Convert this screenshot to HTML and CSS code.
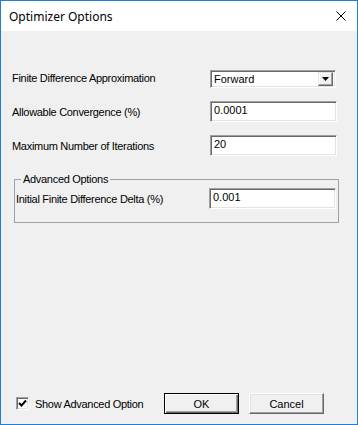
FILE: index.html
```html
<!DOCTYPE html>
<html lang="en">
<head>
    <meta charset="UTF-8">
    <title>Optimizer Options</title>
    <link rel="stylesheet" href="styles.css">
</head>
<body>
    <div class="window">
        <div class="titlebar">
            <span class="title">Optimizer Options</span>
            <span class="close">
                <svg width="10" height="10" viewBox="0 0 10 10"><path d="M0.5 0.5 L9.5 9.5 M9.5 0.5 L0.5 9.5" stroke="#000" stroke-width="1" fill="none"/></svg>
            </span>
        </div>
        <div class="content">
            <div class="row row-first">
                <span class="label">Finite Difference Approximation</span>
                <div class="combo">
                    <span class="combo-text">Forward</span>
                    <span class="combo-btn">
                        <svg width="7" height="4" viewBox="0 0 7 4"><path d="M0 0 H7 L3.5 4 Z" fill="#000"/></svg>
                    </span>
                </div>
            </div>
            <div class="row">
                <span class="label">Allowable Convergence (%)</span>
                <div class="textbox">0.0001</div>
            </div>
            <div class="row">
                <span class="label">Maximum Number of Iterations</span>
                <div class="textbox">20</div>
            </div>

            <!-- Advanced options -->
            <fieldset class="group">
                <legend>Advanced Options</legend>
                <div class="row row-group">
                    <span class="label">Initial Finite Difference Delta (%)</span>
                    <div class="textbox">0.001</div>
                </div>
            </fieldset>

            <div class="footer">
                <label class="check">
                    <span class="checkbox">
                        <svg width="9" height="9" viewBox="0 0 9 9"><path d="M1 4 L3.5 6.5 L8 1.5" stroke="#000" stroke-width="2" fill="none"/></svg>
                    </span>
                    Show Advanced Option
                </label>
                <button class="btn btn-default">OK</button>
                <button class="btn">Cancel</button>
            </div>
        </div>
    </div>
</body>
</html>
```

FILE: styles.css
```css
body {
    margin: 0;
    font-family: "Liberation Sans", Arial, sans-serif;
    font-size: 11px;
    color: #000;
}

.window {
    width: 358px;
    height: 425px;
    box-sizing: border-box;
    border: 1px solid #1b80d8;
    background-color: #f0f0f0;
    display: flex;
    flex-direction: column;
}

.titlebar {
    height: 30px;
    background-color: #fff;
    display: flex;
    align-items: center;
    padding: 0 10px 0 8px;
}

.title {
    flex: 1;
    font-family: "Noto Sans", sans-serif;
    font-size: 12px;
}

.close {
    display: flex;
    margin-right: 1px;
}

.content {
    flex: 1;
    display: flex;
    flex-direction: column;
    padding: 0 0 10px 11px;
}

.row {
    display: flex;
    align-items: center;
    height: 21px;
    margin-top: 13px;
}

.row-first {
    margin-top: 36px;
}

.label {
    width: 198px;
    letter-spacing: -0.3px;
}

/* campos 3D afundados */
.textbox,
.combo {
    box-sizing: border-box;
    width: 127px;
    height: 21px;
    background-color: #fff;
    border: 1px solid;
    border-color: #a0a0a0 #fff #fff #a0a0a0;
    box-shadow: inset 1px 1px 0 #696969, inset -1px -1px 0 #e3e3e3;
    padding: 2px 0 0 3px;
}

.combo {
    width: 126px;
    height: 18px;
    align-self: flex-end;
    display: flex;
    padding: 2px 2px 2px 3px;
}

.combo-text {
    flex: 1;
    line-height: 13px;
}

.combo-btn {
    box-sizing: border-box;
    width: 15px;
    height: 14px;
    margin-top: -1px;
    background-color: #f0f0f0;
    border: 1px solid;
    border-color: #e3e3e3 #696969 #696969 #e3e3e3;
    box-shadow: inset -1px -1px 0 #a0a0a0, inset 1px 1px 0 #fff;
    display: flex;
    align-items: center;
    justify-content: center;
}

.group {
    margin: 17px 0 0 2px;
    padding: 0 0 13px 1px;
    width: 325px;
    box-sizing: border-box;
    border: 1px solid #a0a0a0;
}

.group legend {
    padding: 0 2px;
    margin-left: 5px;
    letter-spacing: -0.3px;
}

.row-group {
    margin-top: 3px;
}

.row-group .label {
    width: 193px;
}

.footer {
    margin-top: auto;
    display: flex;
    align-items: center;
}

.check {
    display: flex;
    align-items: center;
    width: 148px;
    margin-left: 4px;
    letter-spacing: -0.3px;
}

.checkbox {
    box-sizing: border-box;
    width: 13px;
    height: 13px;
    margin-right: 6px;
    background-color: #fff;
    border: 1px solid;
    border-color: #a0a0a0 #fff #fff #a0a0a0;
    box-shadow: inset 1px 1px 0 #696969, inset -1px -1px 0 #e3e3e3;
    display: flex;
    align-items: center;
    justify-content: center;
}

.btn {
    box-sizing: border-box;
    width: 75px;
    height: 21px;
    margin-right: 10px;
    background-color: #f0f0f0;
    font-family: "Liberation Sans", Arial, sans-serif;
    font-size: 11px;
    color: #000;
    border: 1px solid;
    border-color: #fff #696969 #696969 #fff;
    box-shadow: inset -1px -1px 0 #a0a0a0, inset 1px 1px 0 #e3e3e3;
    padding: 0;
}

.btn-default {
    border-color: #000;
    box-shadow: inset 1px 1px 0 #fff, inset -1px -1px 0 #696969, inset -2px -2px 0 #a0a0a0;
}
```
